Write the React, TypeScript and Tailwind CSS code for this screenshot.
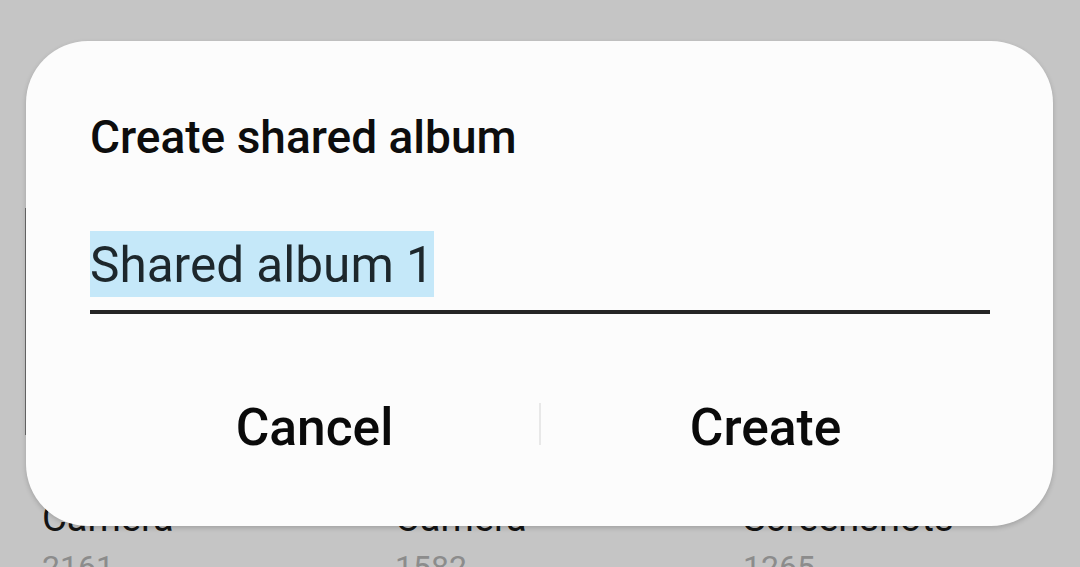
export default function App() {
  return (
    <div
      className="relative w-[1080px] h-[567px] overflow-hidden bg-[#c5c5c5]"
      style={{ fontFamily: "Roboto, 'Noto Sans', sans-serif" }}
    >
      {/* Gallery behind the scrim */}
      <div className="flex flex-col">
        <div className="mt-[208px] ml-[25px] w-px h-[227px] bg-[#6a6a6a]" />
        <div className="flex pl-[42px] mt-[64px]">
          <div className="w-[353px] flex flex-col">
            <span className="text-[38px] leading-none text-[#141414]">Camera</span>
            <span className="mt-[14px] text-[32px] leading-none text-[#8c8c8c]">2161</span>
          </div>
          <div className="w-[348px] flex flex-col">
            <span className="text-[38px] leading-none text-[#141414]">Camera</span>
            <span className="mt-[14px] text-[32px] leading-none text-[#8c8c8c]">1582</span>
          </div>
          <div className="flex flex-col">
            <span className="text-[38px] leading-none text-[#141414]">Screenshots</span>
            <span className="mt-[14px] text-[32px] leading-none text-[#8c8c8c]">1265</span>
          </div>
        </div>
      </div>

      {/* Dialog */}
      <div className="absolute left-[26px] top-[41px] w-[1027px] h-[485px] rounded-[62px] bg-[#fcfcfc] shadow-[0_2px_5px_rgba(0,0,0,0.18)] pt-[73px] pl-[64px] pr-[63px]">
        <h2 className="text-[46px] leading-none font-medium text-[#0d0d0d]">Create shared album</h2>

        <div className="mt-[71px]">
          <span className="inline-block h-[66px] leading-[66px] text-[49.5px] text-[#1d272c] bg-[#c5e8f9] pt-[1px]">
            Shared album 1
          </span>
        </div>
        <div className="mt-[13px] h-[4px] bg-[#252525]" />

        <div className="mt-[88px] flex">
          <button className="flex-1 text-center text-[51.5px] leading-none font-medium text-[#0a0a0a]">Cancel</button>
          <div className="mt-[1px] w-[2px] h-[42px] bg-[#e8e8e8]" />
          <button className="flex-1 text-center text-[51.5px] leading-none font-medium text-[#0a0a0a]">Create</button>
        </div>
      </div>
    </div>
  );
}
